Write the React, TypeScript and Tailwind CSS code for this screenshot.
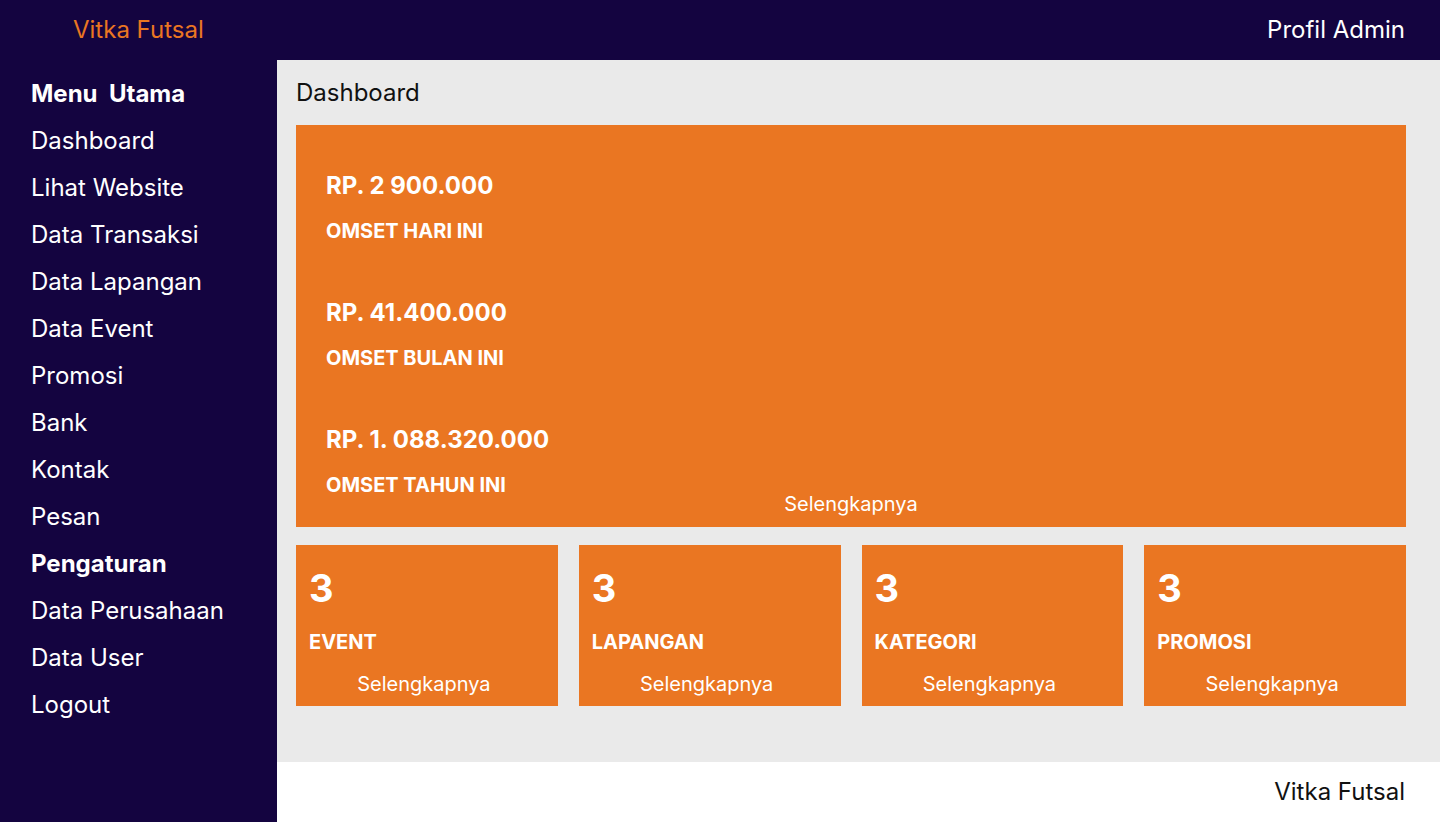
import React from "react"

const menuUtama = [
  "Dashboard",
  "Lihat Website",
  "Data Transaksi",
  "Data Lapangan",
  "Data Event",
  "Promosi",
  "Bank",
  "Kontak",
  "Pesan",
]

const pengaturan = ["Data Perusahaan", "Data User", "Logout"]

const omset = [
  { value: "RP. 2 900.000", label: "OMSET HARI INI" },
  { value: "RP. 41.400.000", label: "OMSET BULAN INI" },
  { value: "RP. 1. 088.320.000", label: "OMSET TAHUN INI" },
]

const stats = [
  { count: "3", label: "EVENT" },
  { count: "3", label: "LAPANGAN" },
  { count: "3", label: "KATEGORI" },
  { count: "3", label: "PROMOSI" },
]

const SidebarItem: React.FC<{ label: string; bold?: boolean }> = ({ label, bold }) => (
  <div className={`h-[47px] leading-[47px] whitespace-pre text-[24px] text-white ${bold ? "font-bold" : ""}`}>
    {label}
  </div>
)

export default function App() {
  return (
    <div
      className="flex h-[822px] w-[1440px] flex-col overflow-hidden"
      style={{ fontFamily: "Inter, 'Noto Sans', sans-serif" }}
    >
      {/* Topbar */}
      <header className="flex h-[60px] shrink-0 items-center justify-between bg-[#140440] pl-[73px] pr-[35px]">
        <span className="text-[24px] text-[#ea7622]">Vitka Futsal</span>
        <span className="text-[24px] text-white">Profil Admin</span>
      </header>

      <div className="flex flex-1">
        {/* Sidebar */}
        <aside className="w-[277px] shrink-0 bg-[#140440] pl-[31px] pt-[10px]">
          <SidebarItem label="Menu  Utama" bold />
          {menuUtama.map((m) => (
            <SidebarItem key={m} label={m} />
          ))}
          <SidebarItem label="Pengaturan" bold />
          {pengaturan.map((m) => (
            <SidebarItem key={m} label={m} />
          ))}
        </aside>

        {/* Main */}
        <div className="flex flex-1 flex-col">
          <main className="flex-1 bg-[#eaeaea] pl-[19px] pr-[34px]">
            <h1 className="h-[65px] pt-[18px] text-[24px] leading-[30px] text-[#111]">Dashboard</h1>

            <div className="flex h-[402px] flex-col bg-[#ea7622] pl-[30px] pt-[46px] text-white">
              {omset.map((o, i) => (
                <div key={o.label} className={i > 0 ? "mt-[52px]" : ""}>
                  <div className="h-[30px] text-[24px] font-bold leading-[30px]">{o.value}</div>
                  <div className="mt-[15px] h-[30px] text-[20px] font-bold leading-[30px]">{o.label}</div>
                </div>
              ))}
              <div className="-mt-[9px] pr-[30px] text-center text-[20px] leading-[26px]">Selengkapnya</div>
            </div>

            <div className="mt-[18px] grid grid-cols-4 gap-x-[21px]">
              {stats.map((s) => (
                <div key={s.label} className="flex h-[161px] flex-col bg-[#ea7622] text-white">
                  <div className="mt-[21px] h-[44px] pl-[13px] text-[38px] font-bold leading-[44px]">{s.count}</div>
                  <div className="mt-[20px] h-[24px] pl-[13px] text-[20px] font-bold leading-[24px]">{s.label}</div>
                  <div className="mt-[18px] h-[24px] pr-[6px] text-center text-[20px] leading-[24px]">Selengkapnya</div>
                </div>
              ))}
            </div>
          </main>

          <footer className="flex h-[60px] shrink-0 items-center justify-end bg-white pr-[35px]">
            <span className="text-[24px] text-[#111]">Vitka Futsal</span>
          </footer>
        </div>
      </div>
    </div>
  )
}
